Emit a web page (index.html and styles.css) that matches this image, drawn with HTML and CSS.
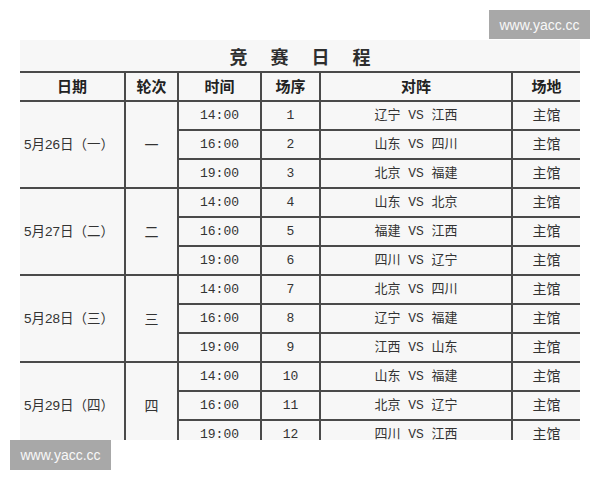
FILE: index.html
```html
<!DOCTYPE html>
<html lang="zh-CN">
<head>
<meta charset="utf-8">
<title>竞赛日程</title>
<link rel="stylesheet" href="styles.css">
</head>
<body>
<div class="page">
  <div class="sheet">
    <div class="title"><span>竞</span><span>赛</span><span>日</span><span>程</span></div>
    <table class="schedule">
      <colgroup>
        <col class="c-date"><col class="c-round"><col class="c-time"><col class="c-no"><col class="c-match"><col class="c-venue">
      </colgroup>
      <thead>
        <tr><th>日期</th><th>轮次</th><th>时间</th><th>场序</th><th>对阵</th><th>场地</th></tr>
      </thead>
      <tbody>
        <tr><td class="date" rowspan="3">5月26日（一）</td><td class="round" rowspan="3">一</td><td class="mono">14:00</td><td class="mono">1</td><td class="mono">辽宁 VS 江西</td><td class="venue">主馆</td></tr>
        <tr><td class="mono">16:00</td><td class="mono">2</td><td class="mono">山东 VS 四川</td><td class="venue">主馆</td></tr>
        <tr><td class="mono">19:00</td><td class="mono">3</td><td class="mono">北京 VS 福建</td><td class="venue">主馆</td></tr>
        <tr><td class="date" rowspan="3">5月27日（二）</td><td class="round" rowspan="3">二</td><td class="mono">14:00</td><td class="mono">4</td><td class="mono">山东 VS 北京</td><td class="venue">主馆</td></tr>
        <tr><td class="mono">16:00</td><td class="mono">5</td><td class="mono">福建 VS 江西</td><td class="venue">主馆</td></tr>
        <tr><td class="mono">19:00</td><td class="mono">6</td><td class="mono">四川 VS 辽宁</td><td class="venue">主馆</td></tr>
        <tr><td class="date" rowspan="3">5月28日（三）</td><td class="round" rowspan="3">三</td><td class="mono">14:00</td><td class="mono">7</td><td class="mono">北京 VS 四川</td><td class="venue">主馆</td></tr>
        <tr><td class="mono">16:00</td><td class="mono">8</td><td class="mono">辽宁 VS 福建</td><td class="venue">主馆</td></tr>
        <tr><td class="mono">19:00</td><td class="mono">9</td><td class="mono">江西 VS 山东</td><td class="venue">主馆</td></tr>
        <tr><td class="date" rowspan="3">5月29日（四）</td><td class="round" rowspan="3">四</td><td class="mono">14:00</td><td class="mono">10</td><td class="mono">山东 VS 福建</td><td class="venue">主馆</td></tr>
        <tr><td class="mono">16:00</td><td class="mono">11</td><td class="mono">北京 VS 辽宁</td><td class="venue">主馆</td></tr>
        <tr><td class="mono">19:00</td><td class="mono">12</td><td class="mono">四川 VS 江西</td><td class="venue">主馆</td></tr>
      </tbody>
    </table>
  </div>
  <div class="mark mark-top">www.yacc.cc</div>
  <div class="mark mark-bottom">www.yacc.cc</div>
</div>
</body>
</html>
```

FILE: styles.css
```css
html, body {
  margin: 0;
  padding: 0;
  background: #ffffff;
}

.page {
  position: relative;
  width: 600px;
  height: 480px;
  overflow: hidden;
}

.sheet {
  margin: 40px 0 0 20px;
  width: 560px;
  height: 400px;
  overflow: hidden;
  background: #f7f7f7;
}

.title {
  height: 31px;
  display: flex;
  justify-content: center;
  align-items: center;
  gap: 23px;
  font-family: "Noto Sans CJK SC", sans-serif;
  font-weight: 700;
  font-size: 18px;
  color: #2e2e2e;
  box-sizing: border-box;
}

.schedule {
  width: 560px;
  border-collapse: collapse;
  table-layout: fixed;
}

.c-date { width: 105px; }
.c-round { width: 53px; }
.c-time { width: 83px; }
.c-no { width: 59px; }
.c-match { width: 192px; }
.c-venue { width: 68px; }

.schedule th,
.schedule td {
  height: 29px;
  padding: 0;
  box-sizing: border-box;
  border: 2px solid #4a4a4a;
  text-align: center;
  vertical-align: middle;
  font-family: "Noto Sans CJK SC", sans-serif;
  font-size: 14px;
  color: #333333;
  line-height: 1;
}

.schedule th {
  font-family: "Liberation Sans", "Noto Sans CJK SC", sans-serif;
  font-weight: 700;
  font-size: 15px;
  color: #222222;
}

.schedule th:first-child,
.schedule td.date {
  border-left: none;
}

.schedule th:last-child,
.schedule td:last-child {
  border-right: none;
}

.schedule td.date {
  font-family: "Liberation Sans", "Noto Sans CJK SC", sans-serif;
  font-size: 13.5px;
  text-align: left;
  padding-left: 4px;
  white-space: nowrap;
}

.schedule td.round {
  font-family: "Liberation Sans", "Noto Sans CJK SC", sans-serif;
  font-size: 14px;
}

.schedule td.mono {
  font-family: "Liberation Mono", "Noto Sans CJK SC", monospace;
  font-size: 13px;
  white-space: pre;
}

.schedule td.venue {
  font-family: "Liberation Mono", "Noto Sans CJK SC", monospace;
  font-size: 14px;
}

.mark {
  position: absolute;
  background: #a8a8a8;
  color: #f8f8f8;
  font-family: "Liberation Sans", Arial, sans-serif;
  font-size: 14px;
  display: flex;
  align-items: center;
  justify-content: center;
}

.mark-top {
  left: 489px;
  top: 10px;
  width: 101px;
  height: 29px;
}

.mark-bottom {
  left: 10px;
  top: 440px;
  width: 101px;
  height: 30px;
}
```
